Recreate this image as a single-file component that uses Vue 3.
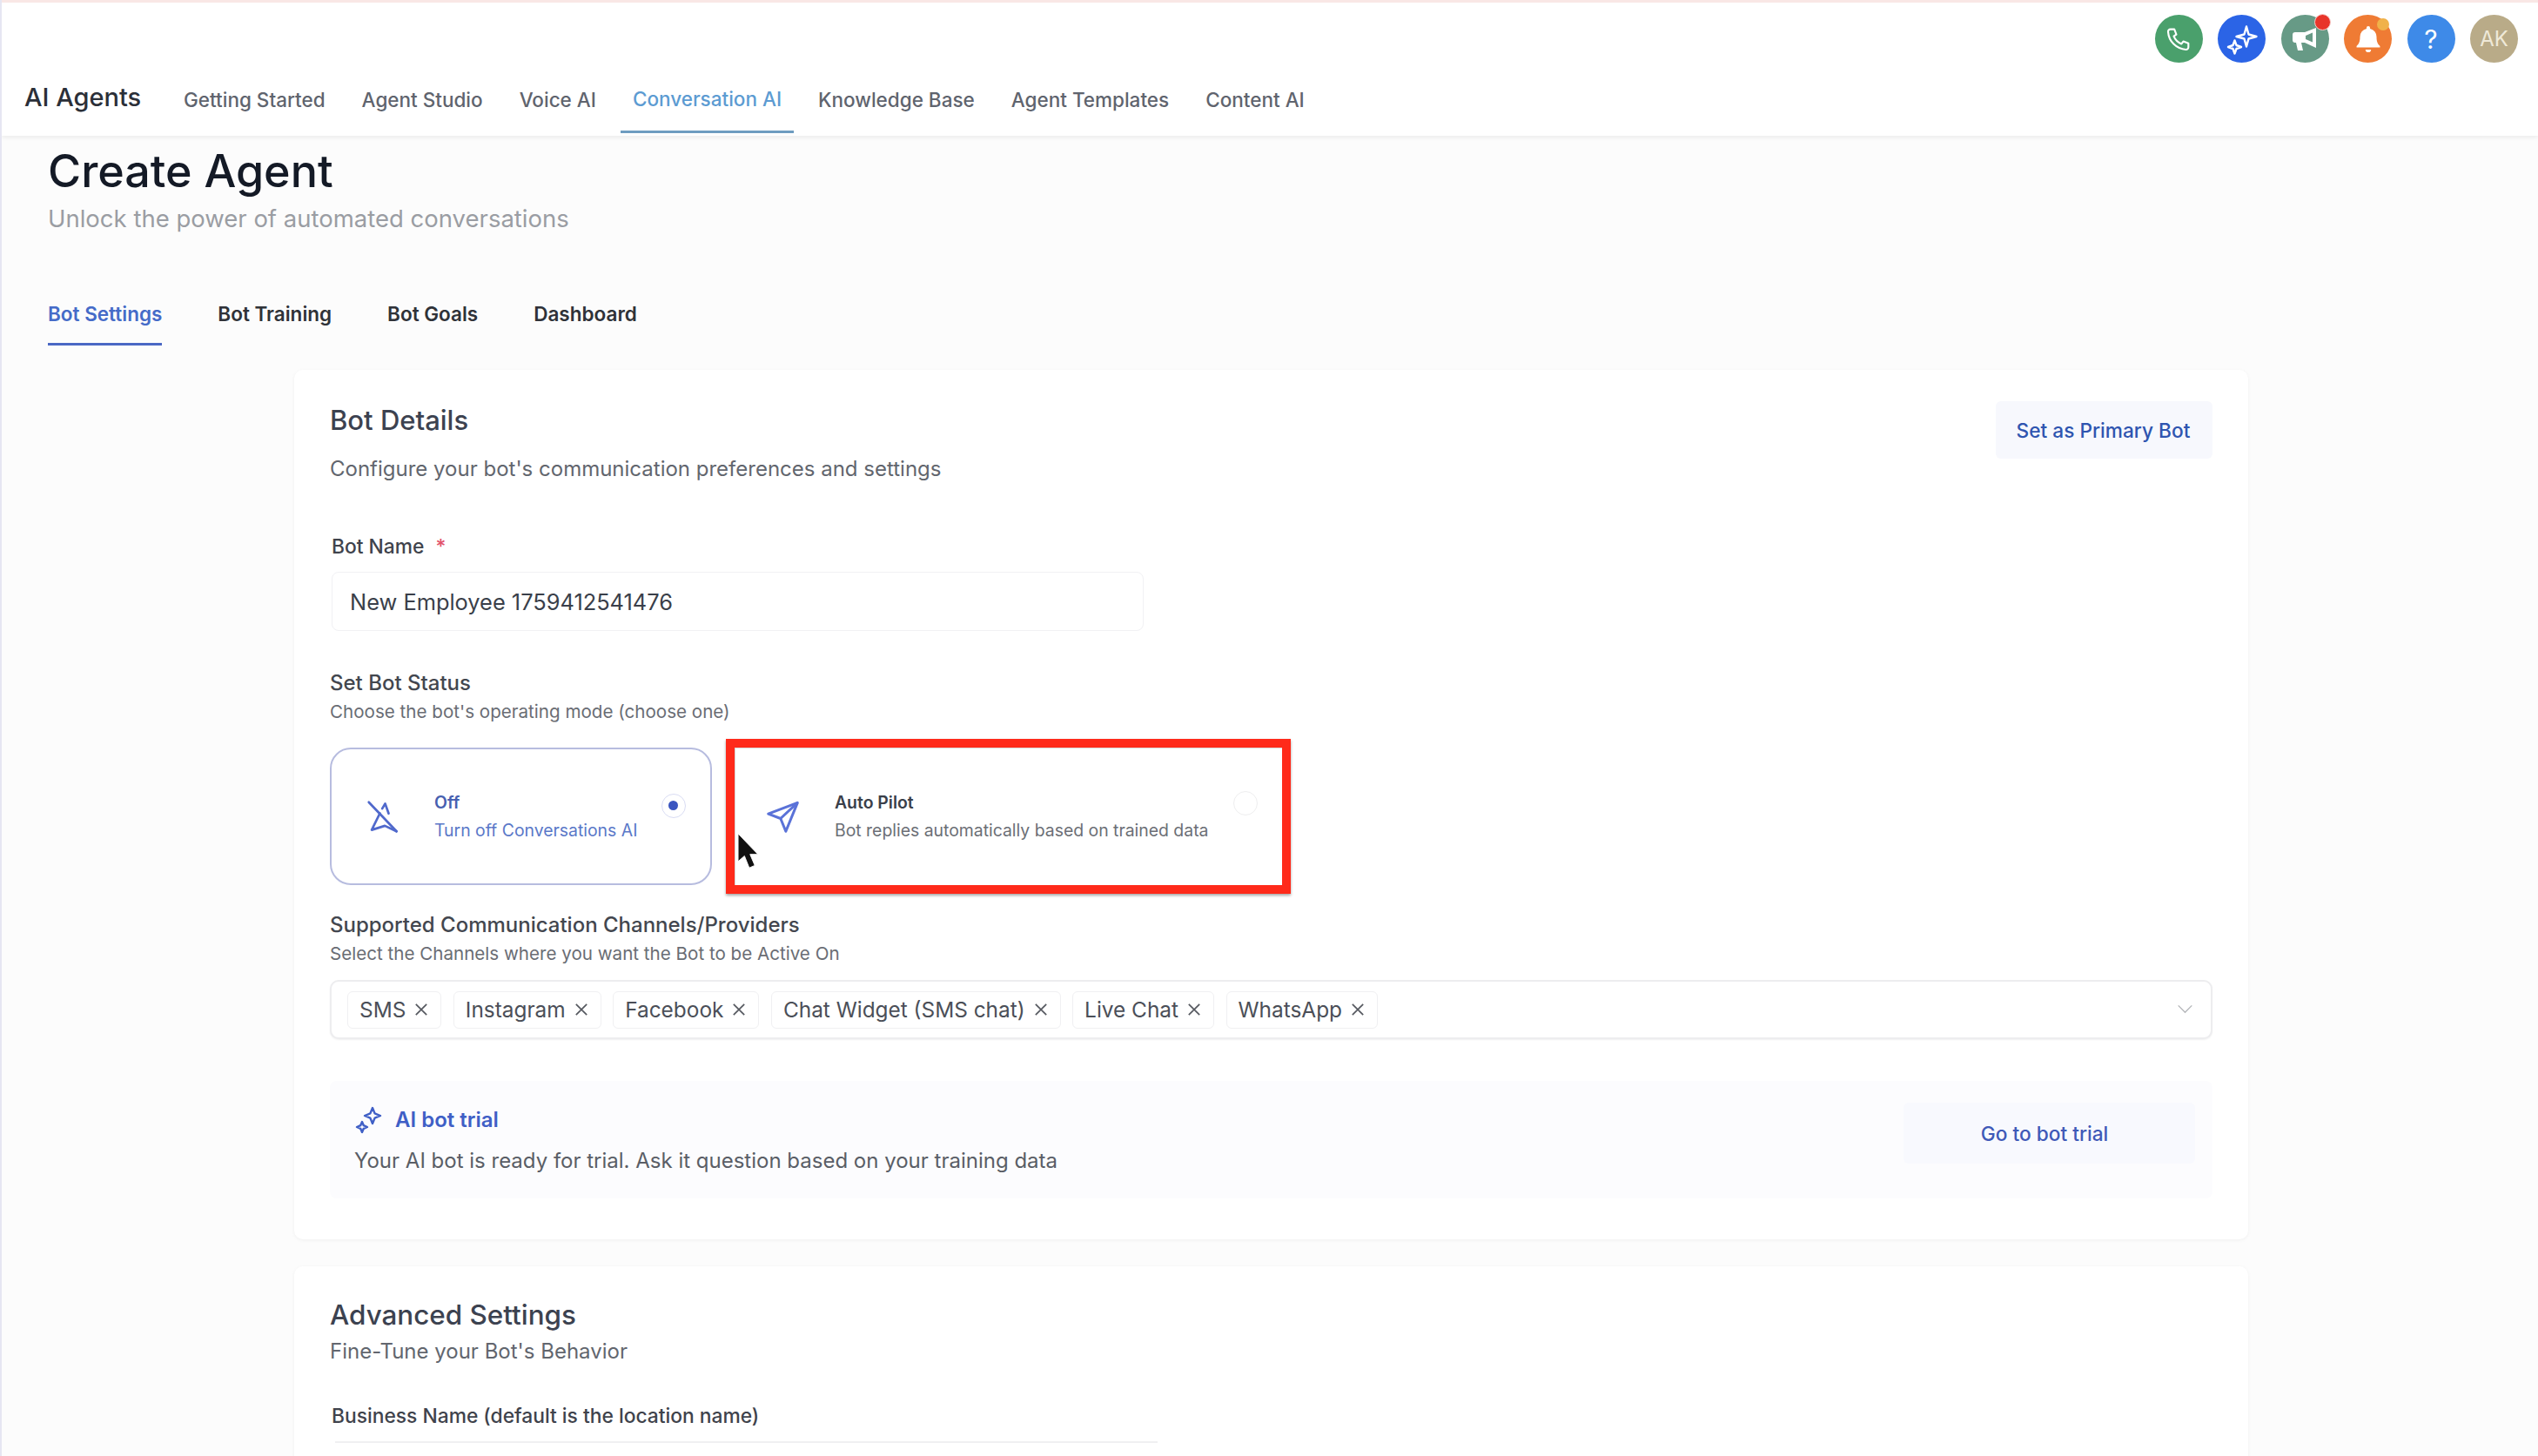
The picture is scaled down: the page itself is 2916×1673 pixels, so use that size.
<script setup>
import { ref } from 'vue';

const navItems = ['Getting Started', 'Agent Studio', 'Voice AI', 'Conversation AI', 'Knowledge Base', 'Agent Templates', 'Content AI'];
const tabs = ['Bot Settings', 'Bot Training', 'Bot Goals', 'Dashboard'];
const channels = ref(['SMS', 'Instagram', 'Facebook', 'Chat Widget (SMS chat)', 'Live Chat', 'WhatsApp']);
const botName = ref('New Employee 1759412541476');
</script>

<template>
  <div class="page">
    <header class="topbar">
      <div class="top-icons">
        <span class="round green">
          <svg viewBox="0 0 24 24" width="32" height="32" fill="none" stroke="#fff" stroke-width="1.6" stroke-linejoin="round"><path d="M5 3.5h3.4l1.7 4.4-2.2 1.6a12 12 0 0 0 6.6 6.6l1.6-2.2 4.4 1.7V19a2 2 0 0 1-2.2 2A16.5 16.5 0 0 1 3 5.7 2 2 0 0 1 5 3.5z"/></svg>
        </span>
        <span class="round blue">
          <svg viewBox="0 0 55 55" width="55" height="55" fill="none" stroke="#fff" stroke-width="2.4" stroke-linejoin="round"><path d="M33 13.500 L35.500 22.500 L44.500 25 L35.500 27.500 L33 36.500 L30.500 27.500 L21.500 25 L30.500 22.500z"/><path d="M19.500 29.500 L21.500 35 L27 37 L21.500 39 L19.500 44.500 L17.500 39 L12 37 L17.500 35z"/></svg>
        </span>
        <span class="round slate">
          <svg viewBox="0 0 55 55" width="55" height="55" fill="#fff"><path d="M40 15v23l-13-6h-4l2 9h-6l-2-9h-1a3 3 0 0 1-3-3v-6a3 3 0 0 1 3-3h11z"/><path d="M36 20.500l-8 3.500v4l8 3.500z" fill="#679a86"/></svg>
          <i class="dot red"></i>
        </span>
        <span class="round orange">
          <svg viewBox="0 0 24 24" width="38" height="38" fill="#fff"><path d="M12 2.500a1.300 1.300 0 0 1 1.300 1.300v.6A6 6 0 0 1 18 10.300c0 4 1 5.300 2.500 6.700v1H3.500v-1C5 15.600 6 14.300 6 10.300a6 6 0 0 1 4.700-5.900v-.6A1.300 1.300 0 0 1 12 2.500z"/><path d="M10 19.500h4a2 2 0 0 1-4 0z"/></svg>
          <i class="dot amber"></i>
        </span>
        <span class="round sky qmark">?</span>
        <span class="round tan">AK</span>
      </div>
      <div class="nav-row">
        <div class="brand">AI Agents</div>
        <nav class="main-nav">
          <a v-for="item in navItems" :key="item" :class="{ on: item === 'Conversation AI' }">{{ item }}</a>
        </nav>
      </div>
    </header>

    <main class="content">
      <h1>Create Agent</h1>
      <p class="lead">Unlock the power of automated conversations</p>

      <div class="tabs">
        <a v-for="tab in tabs" :key="tab" :class="{ on: tab === 'Bot Settings' }">{{ tab }}</a>
      </div>

      <section class="card details">
        <div class="card-head">
          <div>
            <h2>Bot Details</h2>
            <p class="card-sub">Configure your bot's communication preferences and settings</p>
          </div>
          <button class="soft-btn primary-btn">Set as Primary Bot</button>
        </div>

        <label class="field-label name-label">Bot Name <b>*</b></label>
        <input class="text-input" v-model="botName" />

        <h3 class="status-title">Set Bot Status</h3>
        <p class="hint">Choose the bot's operating mode (choose one)</p>

        <div class="modes">
          <div class="mode off">
            <svg class="mode-icon" viewBox="50 50 140 140" width="47" height="47" fill="none" stroke="#5069cc" stroke-width="8" stroke-linejoin="round" stroke-linecap="round">
              <path d="M70 70l95 100"/>
              <path d="M108 108L80 165l45-14 40 19"/>
              <path d="M116 92l10-17 12 34"/>
            </svg>
            <div class="mode-text">
              <strong>Off</strong>
              <span>Turn off Conversations AI</span>
            </div>
            <span class="radio checked"></span>
          </div>
          <div class="red-box">
            <div class="mode pilot">
              <svg class="mode-icon" viewBox="120 50 140 140" width="47" height="47" fill="none" stroke="#5a72d8" stroke-width="9" stroke-linejoin="round">
                <path d="M240 72L140 110l42 16 18 44z"/>
                <path d="M240 72l-58 54"/>
              </svg>
              <div class="mode-text">
                <strong>Auto Pilot</strong>
                <span>Bot replies automatically based on trained data</span>
              </div>
              <span class="radio"></span>
            </div>
          </div>
        </div>

        <h3 class="channels-title">Supported Communication Channels/Providers</h3>
        <p class="hint">Select the Channels where you want the Bot to be Active On</p>

        <div class="multi-select">
          <span class="chip" v-for="c in channels" :key="c">
            {{ c }}
            <svg viewBox="0 0 16 16" width="18" height="18" fill="none" stroke="#55585f" stroke-width="1.500"><path d="M2.500 2.500l11 11M13.500 2.500l-11 11"/></svg>
          </span>
          <svg class="chevron" viewBox="0 0 20 12" width="19" height="11" fill="none" stroke="#b4b6ba" stroke-width="1.500"><path d="M1.500 1.500L10 10l8.500-8.500"/></svg>
        </div>

        <div class="trial">
          <div>
            <div class="trial-title">
              <svg viewBox="0 0 32 32" width="32" height="32" fill="none" stroke="#3f5fc6" stroke-width="2.400" stroke-linejoin="round"><path d="M20 2l2.600 6.400L29 11l-6.400 2.600L20 20l-2.600-6.400L11 11l6.400-2.600z"/><path d="M8 18l1.800 4.200L14 24l-4.200 1.800L8 30l-1.800-4.200L2 24l4.200-1.800z"/></svg>
              AI bot trial
            </div>
            <p class="trial-text">Your AI bot is ready for trial. Ask it question based on your training data</p>
          </div>
          <button class="soft-btn trial-btn">Go to bot trial</button>
        </div>
      </section>

      <section class="card advanced">
        <h2>Advanced Settings</h2>
        <p class="adv-sub">Fine-Tune your Bot's Behavior</p>
        <label class="field-label biz-label">Business Name (default is the location name)</label>
        <div class="biz-input"></div>
      </section>
    </main>

    <!-- screen recording pointer -->
    <svg class="cursor" viewBox="0 0 26 46" width="24" height="42">
      <path d="M1 1v35l8-7 6 15 7-3-6-14h10z" fill="#111" stroke="#fff" stroke-width="1"/>
    </svg>
  </div>
</template>

<style>
html, body { margin: 0; background: #fcfcfc; }
</style>

<style scoped>
.page {
  position: relative;
  width: 2916px;
  height: 1673px;
  overflow: hidden;
  background: #fcfcfc;
  border-left: 2px solid #e6e6f2;
  box-sizing: border-box;
  font-family: Inter, "Liberation Sans", sans-serif;
  color: #3c4250;
}
.topbar {
  height: 156px;
  box-sizing: border-box;
  background: #fff;
  border-top: 3px solid #f9e7e5;
  box-shadow: 0 2px 5px rgba(0, 0, 0, 0.07);
  display: flex;
  flex-direction: column;
}
.top-icons {
  display: flex;
  justify-content: flex-end;
  gap: 17.500px;
  padding: 14px 23px 0 0;
  height: 55px;
}
.round {
  position: relative;
  width: 55px;
  height: 55px;
  border-radius: 50%;
  display: flex;
  align-items: center;
  justify-content: center;
  color: #fff;
  font-size: 24px;
}
.green { background: #4aa06c; }
.blue { background: #2b64e6; }
.slate { background: #679a86; }
.orange { background: #ef7b34; }
.sky { background: #3e8ae8; }
.tan { background: #b9ab88; color: #efe9d8; }
.qmark { font-size: 30px; }
.dot { position: absolute; border-radius: 50%; }
.dot.red { width: 17px; height: 17px; background: #e8352a; top: -1px; right: -2px; border: 1px solid #f6c9c6; }
.dot.amber { width: 14px; height: 14px; background: #f0b24a; top: 4px; right: 3px; }
.nav-row {
  display: flex;
  align-items: flex-start;
  padding-left: 26px;
  height: 84px;
}
.brand {
  font-size: 29px;
  font-weight: 500;
  color: #2b2f38;
  margin-top: 22px;
  width: 157px;
}
.main-nav { display: flex; padding-left: 12px; gap: 14px; }
.main-nav a {
  padding: 29px 14px 0;
  height: 49px;
  font-size: 22.500px;
  font-weight: 500;
  color: #5f646e;
  white-space: nowrap;
}
.main-nav a.on { color: #5c9bd2; border-bottom: 3px solid #6e9cc0; margin-top: -1px; height: 50px; }

.content { padding: 0 0 0 53px; }
h1 {
  margin: 9px 0 0;
  font-size: 52px;
  line-height: 64px;
  font-weight: 500;
  color: #141a26;
}
.lead {
  margin: 5px 0 0;
  font-size: 27.500px;
  line-height: 34px;
  color: #9a9da3;
}
.tabs {
  display: flex;
  gap: 64px;
  margin-top: 78px;
}
.tabs a {
  padding: 0 0 18px;
  font-size: 22.500px;
  line-height: 30px;
  font-weight: 600;
  color: #2f3238;
  white-space: nowrap;
}
.tabs a.on { color: #456bc8; border-bottom: 3px solid #4a68c4; }

.card {
  box-sizing: border-box;
  width: 2245px;
  margin-left: 283px;
  padding: 0 41px;
  background: #fff;
  border-radius: 10px;
  box-shadow: 0 1px 4px rgba(0, 0, 0, 0.05);
}
.details { height: 999px; margin-top: 28px; padding-top: 38px; }
.card-head { display: flex; justify-content: space-between; align-items: flex-start; }
h2 {
  margin: 0;
  font-size: 31px;
  line-height: 40px;
  font-weight: 500;
  color: #3c4250;
}
.card-sub { margin: 21px 0 0; font-size: 24px; line-height: 30px; color: #62666e; }
.soft-btn {
  border: none;
  border-radius: 6px;
  background: #f7f8fd;
  font-family: inherit;
  font-size: 22.700px;
  font-weight: 500;
  color: #2f55b0;
}
.primary-btn { width: 249px; height: 66px; margin-top: -2px; padding-right: 8px; }
.field-label { display: block; font-size: 22.800px; line-height: 28px; font-weight: 500; color: #3f434c; margin-left: 2px; }
.field-label b { color: #e2526b; font-weight: 500; margin-left: 7px; }
.name-label { margin-top: 60px; }
.text-input {
  display: block;
  box-sizing: border-box;
  width: 933px;
  height: 68px;
  margin: 15px 0 0 2px;
  padding: 0 20px;
  border: 1.500px solid #f1f1f4;
  border-radius: 8px;
  outline: none;
  background: #fff;
  font-family: inherit;
  font-size: 25.400px;
  color: #3a3f4a;
}
h3 { margin: 0; font-size: 24px; line-height: 30px; font-weight: 500; color: #43474f; }
.status-title { margin-top: 45px; }
.hint { margin: 4px 0 0; font-size: 20.600px; line-height: 28px; color: #6a6d74; }
.modes { display: flex; align-items: center; gap: 16px; margin-top: 17px; margin-bottom: 21px; }
.mode {
  position: relative;
  box-sizing: border-box;
  display: flex;
  align-items: center;
}
.mode.off {
  width: 439px;
  height: 158px;
  border: 2px solid #b7bcdf;
  border-radius: 24px;
  padding-left: 36px;
  background: #fff;
}
.mode-icon { flex: none; }
.mode-text { display: flex; flex-direction: column; gap: 12px; margin: -1px 0 0 35px; font-size: 19.400px; line-height: 20px; }
.mode-text strong { font-weight: 600; color: #3a3f4a; }
.mode-text span { color: #6c6f76; white-space: nowrap; }
.off .mode-text strong { color: #4760b0; }
.off .mode-text span { color: #5a78c8; }
.radio {
  position: absolute;
  box-sizing: border-box;
  width: 28px;
  height: 28px;
  border: 1.500px solid #eeeeef;
  border-radius: 50%;
  background: #fff;
}
.off .radio { right: 28px; top: 51px; }
.pilot .radio { right: 28px; top: 49px; }
.radio.checked { border-color: #d9dcf3; }
.radio.checked::after {
  content: "";
  position: absolute;
  left: 7px;
  top: 7px;
  width: 11px;
  height: 11px;
  border-radius: 50%;
  background: #3a55c0;
}
.red-box {
  box-sizing: border-box;
  width: 649px;
  height: 178px;
  border: 10px solid #ff2a1a;
  box-shadow: 0 2px 3px rgba(0, 0, 0, 0.35);
  background: #fff;
}
.pilot { height: 100%; padding-left: 31px; border-top: 1px solid #d8d8d8; border-left: 1px solid #d8d8d8; }
.pilot .mode-text { margin-left: 36px; }
.channels-title { margin: 0; }
.multi-select {
  position: relative;
  box-sizing: border-box;
  display: flex;
  align-items: center;
  gap: 13.500px;
  height: 68px;
  margin-top: 16px;
  padding-left: 18px;
  border: 2px solid #ededef;
  border-radius: 10px;
  background: #fff;
  box-shadow: 0 1px 2px rgba(0, 0, 0, 0.06);
}
.chip {
  box-sizing: border-box;
  display: flex;
  align-items: center;
  gap: 9px;
  height: 43px;
  padding: 0 13px;
  border: 1.500px solid #f0f0f2;
  border-radius: 6px;
  font-size: 24.400px;
  color: #4b4f58;
  white-space: nowrap;
}
.chevron { position: absolute; right: 20px; top: 26px; }
.trial {
  box-sizing: border-box;
  display: flex;
  justify-content: space-between;
  align-items: center;
  height: 135px;
  margin-top: 48px;
  padding: 0 20px 0 28px;
  border-radius: 8px;
  background: #fcfcfe;
}
.trial-title { display: flex; align-items: center; gap: 14px; font-size: 24px; line-height: 32px; font-weight: 600; color: #3f5fc6; margin-left: 1px; }
.trial-text { margin: 16px 0 0; font-size: 24px; line-height: 30px; color: #5a5e66; }
.trial-btn { width: 335px; height: 70px; margin-bottom: 15px; padding-right: 17px; color: #3f5ab8; background: #f8f9fe; }

.advanced { height: 260px; margin-top: 31px; padding-top: 36px; }
.advanced h2 { font-size: 31.400px; }
.adv-sub { margin: 7px 0 0; font-size: 24px; line-height: 30px; color: #62666e; }
.biz-label { margin-top: 45px; }
.biz-input {
  width: 945px;
  height: 60px;
  margin: 15px 0 0 6px;
  border-top: 2px solid #f0f0f2;
}
.cursor { position: absolute; left: 845px; top: 957px; }
</style>
